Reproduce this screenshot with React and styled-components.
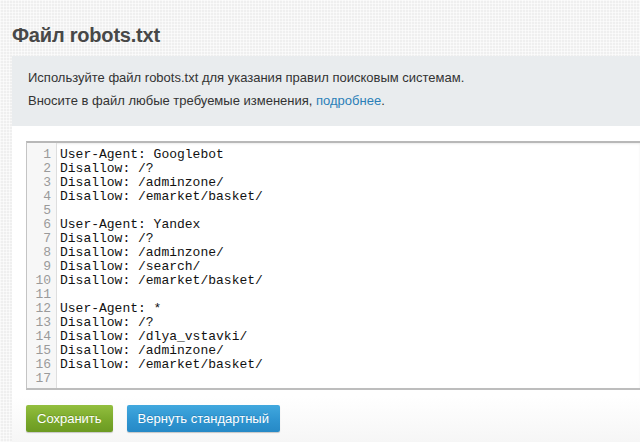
import React from "react";
import styled, { createGlobalStyle } from "styled-components";

const Global = createGlobalStyle`
  html, body { margin: 0; padding: 0; }
  body {
    width: 640px;
    height: 442px;
    overflow: hidden;
    font-family: "Liberation Sans", Arial, sans-serif;
    background-color: #efefef;
    background-image:
      repeating-linear-gradient(0deg, rgba(255,255,255,0.55) 0 1px, transparent 1px 3px),
      repeating-linear-gradient(90deg, rgba(255,255,255,0.55) 0 1px, transparent 1px 3px);
  }
`;

const Page = styled.div`
  padding-left: 12px;
  display: flex;
  flex-direction: column;
`;

const Title = styled.h1`
  margin: 0;
  height: 56px;
  box-sizing: border-box;
  padding-top: 23px;
  font-size: 20px;
  line-height: 24px;
  font-weight: bold;
  color: #484848;
  letter-spacing: -0.2px;
`;

const Info = styled.div`
  background: #e9ecee;
  height: 70px;
  box-sizing: border-box;
  padding: 14px 0 0 16px;
  display: flex;
  flex-direction: column;
  gap: 7px;
`;

const InfoLine = styled.p`
  margin: 0;
  font-size: 13px;
  line-height: 16px;
  color: #333;
`;

const Link = styled.a`
  color: #2b7fb8;
  text-decoration: none;
`;

const Body = styled.div`
  background: linear-gradient(to bottom, #fff 0, #fff 270px, #f6f6f6 100%);
  height: 316px;
  box-sizing: border-box;
  padding: 15px 0 0 14px;
  display: flex;
  flex-direction: column;
`;

const Editor = styled.div`
  display: flex;
  height: 249px;
  box-sizing: border-box;
  border: 1px solid #c4c4c4;
  border-top: 2px solid #b8b8b8;
  border-bottom: 2px solid #bdbdbd;
  border-right: none;
  background: #fff;
  box-shadow: inset 0 1px 2px rgba(0,0,0,0.08);
`;

const Gutter = styled.div`
  width: 30px;
  flex: none;
  background: #f7f7f7;
  border-right: 1px solid #dedede;
  padding: 5px 5px 0 0;
  box-sizing: border-box;
  text-align: right;
`;

const Num = styled.div`
  font-family: "Liberation Mono", "Courier New", monospace;
  font-size: 13px;
  line-height: 14px;
  height: 14px;
  color: #9a9a9a;
`;

const Code = styled.div`
  flex: 1;
  padding: 5px 0 0 3px;
`;

const CodeLine = styled.div`
  font-family: "Liberation Mono", "Courier New", monospace;
  font-size: 13px;
  line-height: 14px;
  height: 14px;
  color: #111;
  white-space: pre;
`;

const Buttons = styled.div`
  display: flex;
  gap: 14px;
  margin-top: 15px;
`;

const Button = styled.button`
  height: 27px;
  padding: 0 ${p => p.$pad}px;
  border: none;
  border-radius: 2px;
  font-family: "Liberation Sans", Arial, sans-serif;
  font-size: 13px;
  color: #fff;
  text-shadow: 0 -1px 0 rgba(0,0,0,0.15);
  cursor: pointer;
  background: ${p => p.$green
    ? "linear-gradient(to bottom, #93bf3f 0%, #7aa92b 55%, #6c9a22 100%)"
    : "linear-gradient(to bottom, #41a8de 0%, #2f95d1 55%, #2689c6 100%)"};
  box-shadow: 0 1px 1px rgba(0,0,0,0.2);
`;

const lines = [
  "User-Agent: Googlebot",
  "Disallow: /?",
  "Disallow: /adminzone/",
  "Disallow: /emarket/basket/",
  "",
  "User-Agent: Yandex",
  "Disallow: /?",
  "Disallow: /adminzone/",
  "Disallow: /search/",
  "Disallow: /emarket/basket/",
  "",
  "User-Agent: *",
  "Disallow: /?",
  "Disallow: /dlya_vstavki/",
  "Disallow: /adminzone/",
  "Disallow: /emarket/basket/",
  "",
];

export default function App() {
  return (
    <>
      <Global />
      <Page>
        <Title>Файл robots.txt</Title>
        <Info>
          <InfoLine>Используйте файл robots.txt для указания правил поисковым системам.</InfoLine>
          <InfoLine>
            Вносите в файл любые требуемые изменения, <Link href="#">подробнее</Link>.
          </InfoLine>
        </Info>
        <Body>
          <Editor>
            <Gutter>
              {lines.map((_, i) => (
                <Num key={i}>{i + 1}</Num>
              ))}
            </Gutter>
            <Code>
              {lines.map((l, i) => (
                <CodeLine key={i}>{l}</CodeLine>
              ))}
            </Code>
          </Editor>
          <Buttons>
            <Button $green $pad={11}>Сохранить</Button>
            <Button $pad={11}>Вернуть стандартный</Button>
          </Buttons>
        </Body>
      </Page>
    </>
  );
}
